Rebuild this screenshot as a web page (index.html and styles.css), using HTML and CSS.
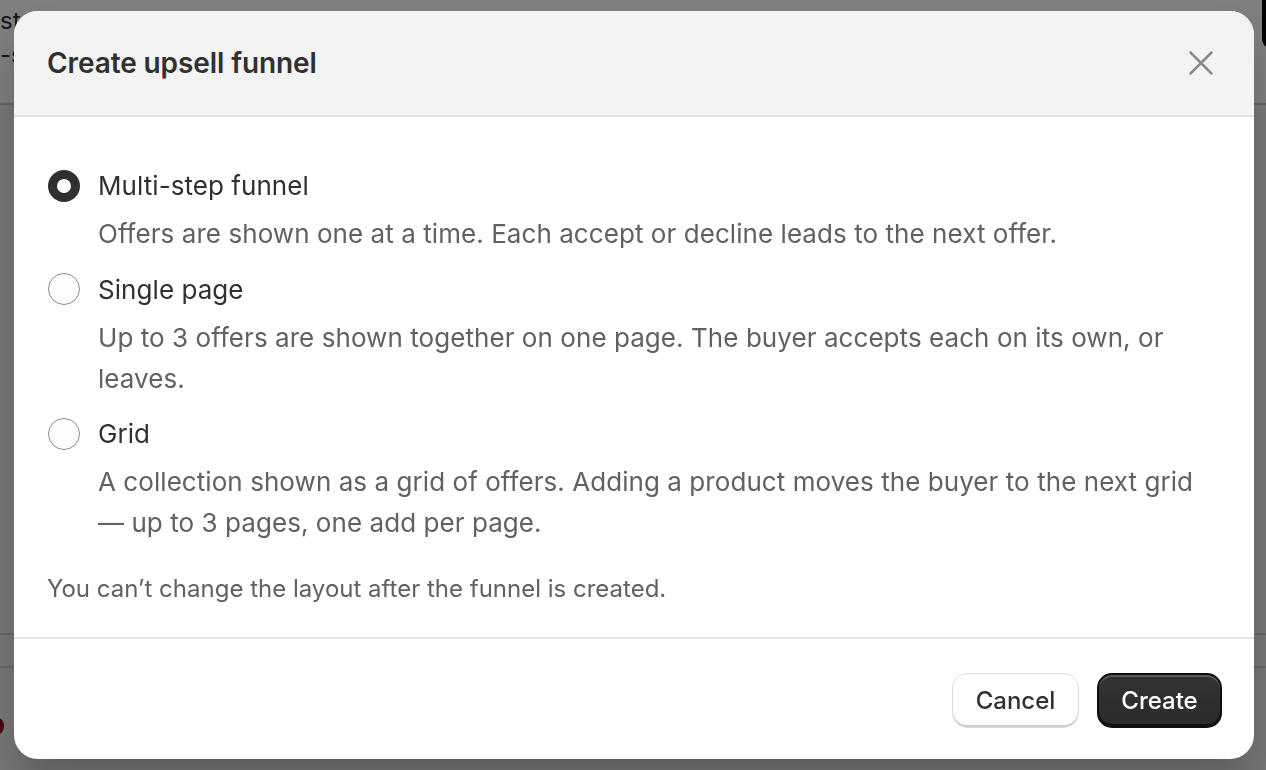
FILE: index.html
```html
<!DOCTYPE html>
<html lang="en">
<head>
<meta charset="utf-8">
<title>Create upsell funnel</title>
<link rel="stylesheet" href="styles.css">
</head>
<body>
  <div class="page">
    <div class="page-head">
      <div class="page-title">st</div>
      <div class="page-sub">-s</div>
      <div class="page-action"></div>
    </div>
    <div class="page-band"></div>
    <div class="page-spacer"></div>
    <div class="page-row"></div>
    <div class="page-row page-row-alert"><span class="alert-dot"></span></div>
  </div>

  <div class="backdrop"></div>

  <div class="modal" role="dialog" aria-labelledby="modal-title">
    <header class="modal-header">
      <h2 id="modal-title" class="modal-title">Create upsell funnel</h2>
      <button class="close-btn" aria-label="Close">
        <svg viewBox="0 0 24 24" width="24" height="24" aria-hidden="true">
          <path d="M1.5 1.5 L22.5 22.5 M22.5 1.5 L1.5 22.5" stroke="currentColor" stroke-width="2.5" stroke-linecap="round" fill="none"/>
        </svg>
      </button>
    </header>

    <section class="modal-body">
      <div class="choices">
        <label class="choice">
          <span class="radio radio-checked"></span>
          <span class="choice-text">
            <span class="choice-label">Multi-step funnel</span>
            <span class="choice-help">Offers are shown one at a time. Each accept or decline leads to the next offer.</span>
          </span>
        </label>
        <label class="choice">
          <span class="radio"></span>
          <span class="choice-text">
            <span class="choice-label">Single page</span>
            <span class="choice-help">Up to 3 offers are shown together on one page. The buyer accepts each on its own, or leaves.</span>
          </span>
        </label>
        <label class="choice">
          <span class="radio"></span>
          <span class="choice-text">
            <span class="choice-label">Grid</span>
            <span class="choice-help">A collection shown as a grid of offers. Adding a product moves the buyer to the next grid — up to 3 pages, one add per page.</span>
          </span>
        </label>
      </div>
      <p class="note">You can’t change the layout after the funnel is created.</p>
    </section>

    <footer class="modal-footer">
      <button class="btn btn-secondary">Cancel</button>
      <button class="btn btn-primary">Create</button>
    </footer>
  </div>
</body>
</html>
```

FILE: styles.css
```css
* {
  box-sizing: border-box;
}

html,
body {
  margin: 0;
  height: 100%;
}

body {
  font-family: Inter, "Noto Sans", "Liberation Sans", sans-serif;
  color: #303030;
  background: #ffffff;
  overflow: hidden;
}

/* Underlying page, dimmed by the backdrop */
.page {
  height: 100%;
  display: flex;
  flex-direction: column;
}

.page-head {
  position: relative;
  height: 103px;
  padding-top: 4px;
  font-size: 24px;
  line-height: 34px;
  color: #303030;
}

.page-action {
  position: absolute;
  right: -20px;
  top: -10px;
  width: 24px;
  height: 60px;
  border-radius: 12px;
  background: #000;
}

.page-band {
  height: 32px;
  background: #f1f1f1;
  border-top: 2px solid #cfcfcf;
}

.page-spacer {
  flex: 0 0 498px;
  background: #f1f1f1;
}

.page-row {
  height: 33px;
  border-top: 2px solid #d4d4d4;
  background: #f1f1f1;
}

.page-row-alert {
  flex: 1;
  position: relative;
}

.alert-dot {
  position: absolute;
  left: -8px;
  top: 50px;
  width: 12px;
  height: 16px;
  border-radius: 50%;
  background: #8e0b21;
}

.backdrop {
  position: fixed;
  inset: 0;
  background: rgba(0, 0, 0, 0.5);
}

/* Dialog */
.modal {
  position: fixed;
  left: 14px;
  top: 11px;
  width: 1240px;
  height: 748px;
  display: flex;
  flex-direction: column;
  background: #ffffff;
  border-radius: 24px;
  overflow: hidden;
  box-shadow: 0 26px 40px rgba(0, 0, 0, 0.22);
}

.modal-header {
  flex: 0 0 106px;
  display: flex;
  align-items: center;
  justify-content: space-between;
  padding: 0 38px 0 33px;
  background: #f3f3f3;
  border-bottom: 2px solid #e3e3e3;
}

.modal-title {
  margin: 0;
  font-size: 28px;
  font-weight: 630;
  letter-spacing: -0.1px;
  color: #303030;
}

.close-btn {
  display: flex;
  align-items: center;
  justify-content: center;
  width: 30px;
  height: 30px;
  padding: 0;
  border: 0;
  background: none;
  color: #8a8a8a;
  cursor: pointer;
}

.modal-body {
  flex: 1;
  padding: 48px 50px 0 34px;
  border-bottom: 2px solid #e3e3e3;
}

.choices {
  display: flex;
  flex-direction: column;
  gap: 14.5px;
}

.choice {
  display: flex;
  gap: 18px;
  align-items: flex-start;
}

.radio {
  flex: 0 0 32px;
  width: 32px;
  height: 32px;
  margin-top: 4.5px;
  border-radius: 50%;
  border: 1.5px solid #8a8a8a;
  background: #fdfdfd;
}

.radio-checked {
  border: 9.5px solid #303030;
  background: #ffffff;
}

.choice-text {
  display: flex;
  flex-direction: column;
  gap: 7px;
}

.choice-label {
  font-size: 26px;
  line-height: 41px;
  letter-spacing: 0.06px;
  color: #303030;
}

.choice-help {
  font-size: 26px;
  line-height: 41px;
  letter-spacing: 0.06px;
  color: #616161;
}

.note {
  margin: 26px 0 0 -1px;
  font-size: 24px;
  line-height: 40px;
  color: #616161;
}

.modal-footer {
  flex: 0 0 120px;
  display: flex;
  align-items: center;
  justify-content: flex-end;
  gap: 18px;
  padding: 3px 32px 0 0;
}

.btn {
  height: 55px;
  padding: 0 22px;
  border-radius: 15px;
  font-family: inherit;
  font-size: 24px;
  font-weight: 550;
  cursor: pointer;
}

.btn-secondary {
  width: 127px;
  color: #303030;
  background: #ffffff;
  border: 1.5px solid #dcdcdc;
  box-shadow: inset 0 -2px 0 #cccccc;
}

.btn-primary {
  width: 125px;
  color: #ffffff;
  background: linear-gradient(#333333, #2b2b2b);
  border: 2px solid #0f0f0f;
  box-shadow: inset 0 2px 0 rgba(255, 255, 255, 0.2), inset 0 -2px 0 rgba(0, 0, 0, 0.6);
}
```
